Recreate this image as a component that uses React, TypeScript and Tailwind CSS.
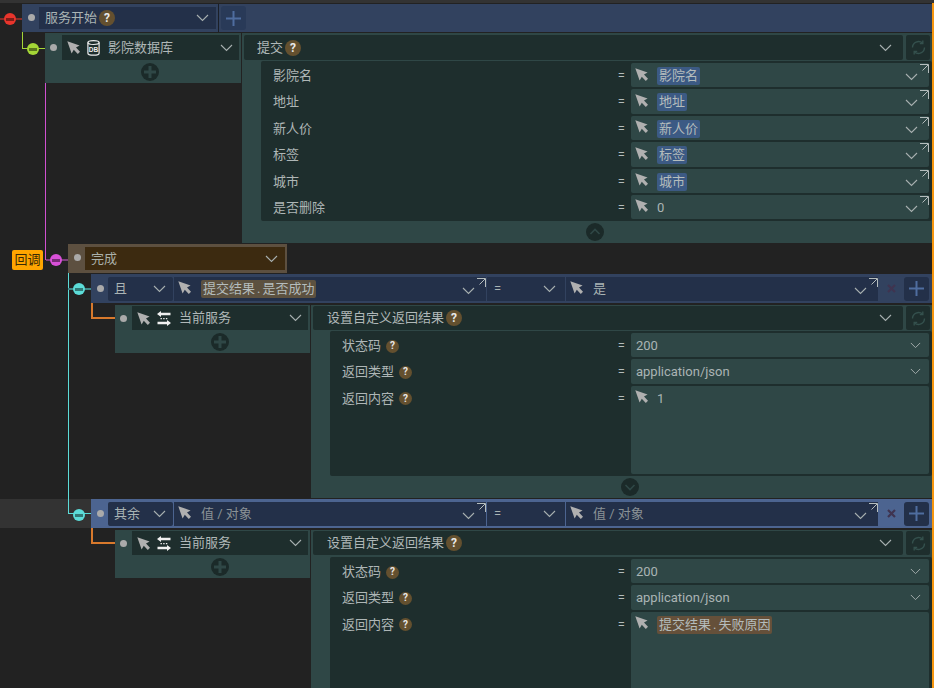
import React from "react";

const Chev = ({ className = "" }: { className?: string }) => (
  <svg width="13" height="8" viewBox="0 0 13 8" className={`shrink-0 ${className}`} fill="none" stroke="#a8b0b0" strokeWidth="1.1">
    <path d="M1 1l5.5 5.5L12 1" />
  </svg>
);

const Arrow = ({ className = "" }: { className?: string }) => (
  <svg width="13" height="13" viewBox="0 0 13 13" className={`shrink-0 ${className}`} fill="#b0b0b0">
    <path d="M0.3 0.3L12.6 4.4 9 6.5 13 10.7 10.8 12.9 6.8 8.7 4.6 12.6Z" />
  </svg>
);

const Expand = () => (
  <svg width="10" height="10" viewBox="0 0 10 10" className="absolute right-0 top-[1px]" fill="none" stroke="#b5bdbd" strokeWidth="1">
    <path d="M1 .5h8.5V9M9 1L3.5 6.5" />
  </svg>
);

const Help = ({ small = false }: { small?: boolean }) => (
  <span className={`inline-flex items-center justify-center rounded-full bg-[#64502f] text-[#e8e8e8] font-bold shrink-0 ${small ? "w-[13px] h-[13px] text-[10px]" : "w-[16px] h-[16px] text-[12px]"}`}>?</span>
);

const Dot = ({ className = "" }: { className?: string }) => <span className={`w-[7px] h-[7px] rounded-full bg-[#aaaaaa] shrink-0 ${className}`} />;

const Db = () => (
  <svg width="13" height="16" viewBox="0 0 13 16" className="shrink-0" fill="none" stroke="#eeeeee" strokeWidth="1.2">
    <ellipse cx="6.5" cy="2.6" rx="5.6" ry="1.9" />
    <path d="M.9 2.6v10.6c0 1.1 2.5 2 5.6 2s5.6-.9 5.6-2V2.6" />
    <text x="6.5" y="11.8" textAnchor="middle" fontSize="6.5" fontWeight="700" fill="#eeeeee" stroke="none" fontFamily="Liberation Sans">DB</text>
  </svg>
);

const Swap = () => (
  <svg width="14" height="15" viewBox="0 0 14 15" className="shrink-0" fill="#f0f0f0">
    <path d="M4 0L0 3l4 3V4.2h9.5V1.8H4zM10 9l4 3-4 3v-1.8H.5v-2.4H10z" />
    <path d="M3.5 7h1.4v1.2H3.5zM6.2 7h1.4v1.2H6.2zM8.9 7h1.4v1.2H8.9z" />
  </svg>
);

const Refresh = () => (
  <div className="w-[24px] ml-[3px] rounded-[2px] bg-[#1e2e2d] flex items-center justify-center shrink-0">
    <svg width="15" height="15" viewBox="0 0 15 15" fill="none" stroke="#34504d" strokeWidth="1.4">
      <path d="M1.5 7.5a6 6 0 0 1 10-4.4M13.5 7.5a6 6 0 0 1-10 4.4" />
      <path d="M11.8 .6v3h-3M3.2 14.4v-3h3" />
    </svg>
  </div>
);

const CircleBtn = ({ kind }: { kind: "plus" | "up" | "down" }) => (
  <span className="w-[18px] h-[18px] rounded-full bg-[#1b2a29] flex items-center justify-center">
    <svg width="12" height="12" viewBox="0 0 12 12" fill="none" stroke="#2f4746" strokeWidth={kind === "plus" ? 3 : 1.6}>
      {kind === "plus" && <path d="M6 0v12M0 6h12" />}
      {kind === "up" && <path d="M1.5 8L6 3.5 10.5 8" />}
      {kind === "down" && <path d="M1.5 4L6 8.5 10.5 4" />}
    </svg>
  </span>
);

const Plus = ({ bg }: { bg: string }) => (
  <div className={`w-[25px] h-[24px] rounded-[3px] flex items-center justify-center shrink-0 ${bg}`}>
    <svg width="15" height="15" viewBox="0 0 15 15" stroke="#4f6d9f" strokeWidth="2"><path d="M7.5 0v15M0 7.5h15" /></svg>
  </div>
);

const Chip = ({ children, bg }: { children: React.ReactNode; bg: string }) => (
  <span className={`px-[2px] h-[18px] leading-[18px] inline-block rounded-[2px] ${bg} text-[#b4bcbc]`}>{children}</span>
);

const Period = () => <span className="mx-[2px]">.</span>;

const Row = ({ label, help, value, tall, noArrow, noChev }: { label: string; help?: boolean; value: React.ReactNode; tall?: string; noArrow?: boolean; noChev?: boolean }) => (
  <div className={`flex mb-[2px] ${tall ?? "h-[24.4px]"}`}>
    <div className="flex-1 flex items-start justify-between pt-[3px] pr-[6px] pl-[12px] text-[#aeb6b6]">
      <span className="flex items-center gap-[5px]">{label}{help && <Help small />}</span>
      <span className="text-[#b4bcbc]">=</span>
    </div>
    <div className={`w-[298px] mr-[3px] bg-[#2f4746] rounded-[2px] relative flex items-start ${noArrow ? "pl-[5px]" : "pl-[4px]"} pt-[2px] shrink-0`}>
      {!noArrow && <Arrow className="mt-[2.5px] mr-[9px]" />}
      <span className="flex-1 mt-[1px] text-[#aab4b4]">{value}</span>
      {!noChev && (noArrow ? <Chev className="absolute right-[8px] top-[9px] w-[11px] h-[7px]" /> : <><Chev className="absolute right-[11px] top-[10px]" /><Expand /></>)}
    </div>
  </div>
);

const NodeHeader = ({ title, db, wide }: { title: string; db?: boolean; wide?: boolean }) => (
  <div className={`h-[48px] bg-[#2f4746] shrink-0 flex flex-col ${wide ? "w-[196px] h-[50px]" : "w-[195px]"}`}>
    <div className={`flex items-center ${wide ? "mt-[2px] h-[25px]" : "mt-[1px] h-[24px]"}`}>
      <Dot className="ml-[5px] mr-[5px]" />
      <div className="flex-1 mr-[2px] h-full bg-[#1e2e2d] flex items-center pl-[5px] pr-[6px] gap-[7px]">
        <Arrow />
        {db ? <Db /> : <Swap />}
        <span className="flex-1 ml-[1px] text-[#b0b8b8]">{title}</span>
        <Chev />
      </div>
    </div>
    <div className="flex-1 flex items-center justify-center pl-[14px]"><CircleBtn kind="plus" /></div>
  </div>
);

const PanelHeader = ({ title, left, compact }: { title: string; left: string; compact?: boolean }) => (
  <div className={`flex shrink-0 mx-[2px] ${compact ? "h-[24px] mt-[1px]" : "h-[25px] mt-[2px]"}`}>
    <div className={`flex-1 bg-[#1e2e2d] rounded-[2px] flex items-center ${left} pr-[11px] gap-[2px] text-[#b0b8b8]`}>
      <span>{title}</span><Help />
      <span className="flex-1" />
      <Chev />
    </div>
    <Refresh />
  </div>
);

const Select = ({ w, children }: { w: string; children: React.ReactNode }) => (
  <div className={`${w} bg-[#233049] h-[24px] relative flex items-center shrink-0 text-[#aab4b4]`}>{children}</div>
);

const CondBar = ({ label, bar, left, right }: { label: string; bar: string; left: React.ReactNode; right: React.ReactNode }) => (
  <div className={`flex items-center h-[29px] ml-[91px] mr-[2px] ${bar}`}>
    <Dot className="ml-[6px] mr-[4px] mb-[1px]" />
    <div className="flex items-center gap-[1px]">
      <Select w="w-[65px] rounded-[2px]"><span className="ml-[6px] flex-1">{label}</span><Chev className="mr-[7px]" /></Select>
      <Select w="w-[312px]"><Arrow className="ml-[4px] mr-[10px] mb-[2px]" />{left}<Chev className="absolute right-[11px] top-[10px]" /><Expand /></Select>
      <Select w="w-[78px]"><span className="ml-[7px] flex-1">=</span><Chev className="mr-[9px]" /></Select>
      <Select w="w-[312px]"><Arrow className="ml-[4px] mr-[10px] mb-[2px]" />{right}<Chev className="absolute right-[11px] top-[10px]" /><Expand /></Select>
    </div>
    <span className="w-[26px] flex justify-center shrink-0">
      <svg width="9" height="9" viewBox="0 0 9 9" stroke="#3f3450" strokeWidth="2.2"><path d="M1 1l7 7M8 1L1 8" /></svg>
    </span>
    <Plus bg="bg-[#233049]" />
  </div>
);

const Sub = ({ last, value }: { last?: boolean; value: React.ReactNode }) => (
  <div className={`flex ml-[115px] mr-[2px] gap-[1px] mt-[2px] ${last ? "h-[170px]" : "h-[193px]"}`}>
    <NodeHeader title="当前服务" />
    <div className="flex-1 bg-[#2f4746] flex flex-col min-w-0">
      <PanelHeader title="设置自定义返回结果" left="pl-[14px]" compact />
      <div className={`ml-[19px] pt-[2px] bg-[#1e2e2d] flex-1 rounded-[2px] flex flex-col min-h-0 ${last ? "mt-[2px]" : "mt-[1px]"}`}>
        <Row label="状态码" help value="200" noArrow />
        <Row label="返回类型" help value="application/json" noArrow />
        <Row label="返回内容" help value={value} tall="flex-1" noChev />
      </div>
      {!last && <div className="h-[22px] flex items-center justify-center shrink-0 pl-[16px]"><CircleBtn kind="down" /></div>}
    </div>
  </div>
);

const firstRows: [string, React.ReactNode][] = [
  ["影院名", <Chip bg="bg-[#3c5a84]">影院名</Chip>],
  ["地址", <Chip bg="bg-[#3c5a84]">地址</Chip>],
  ["新人价", <Chip bg="bg-[#3c5a84]">新人价</Chip>],
  ["标签", <Chip bg="bg-[#3c5a84]">标签</Chip>],
  ["城市", <Chip bg="bg-[#3c5a84]">城市</Chip>],
  ["是否删除", "0"],
];

const Knob = ({ x, y, color }: { x: string; y: string; color: string }) => (
  <span className={`absolute ${x} ${y} w-[12px] h-[12px] rounded-full ${color} flex items-center justify-center`}>
    <span className="w-[8px] h-[3px] bg-black/45" />
  </span>
);

export default function App() {
  return (
    <div className="relative w-[934px] h-[688px] overflow-hidden bg-[#222222] text-[13px] leading-[20px]" style={{ fontFamily: 'Roboto, "Noto Sans CJK SC", sans-serif' }}>
      <div className="h-[3px] bg-[#333333]" />
      <div className="h-[1px]" />

      {/* start bar */}
      <div className="flex items-center h-[28px] ml-[22px] mr-[2px] bg-[#32425f]">
        <Dot className="ml-[6px] mr-[4px] mb-[1px]" />
        <div className="w-[177px] h-[22px] bg-[#233049] flex items-center pl-[6px] pr-[7px] gap-[2px] text-[#aab4b4]">
          <span>服务开始</span><Help /><span className="flex-1" /><Chev />
        </div>
        <span className="w-[1px] h-[28px] bg-[#1b1f27] ml-[2px] mr-[2px]" />
        <Plus bg="bg-[#293a58]" />
      </div>

      {/* database node */}
      <div className="flex ml-[45px] mr-[2px] mt-[1px] h-[210px] gap-[1px]">
        <NodeHeader title="影院数据库" db wide />
        <div className="flex-1 bg-[#2f4746] flex flex-col min-w-0">
          <PanelHeader title="提交" left="pl-[13px]" />
          <div className="ml-[19px] mt-[1px] pt-[2px] bg-[#1e2e2d] h-[160px] rounded-[2px] shrink-0">
            {firstRows.map(([l, v]) => <Row key={l} label={l} value={v} />)}
          </div>
          <div className="flex-1 flex items-center justify-center pl-[16px]"><CircleBtn kind="up" /></div>
        </div>
      </div>

      {/* callback bar */}
      <div className="flex items-center h-[29px] ml-[68px] mt-[1px] w-[219px] bg-[#5d5040]">
        <Dot className="ml-[6px] mr-[4px] mb-[3px]" />
        <div className="w-[200px] h-[23px] bg-[#3c2a10] flex items-center pl-[6px] pr-[7px] pt-[1px] text-[#aab0aa] justify-between">
          <span>完成</span><Chev />
        </div>
      </div>

      <div className="mt-[1px]" />
      <CondBar label="且" bar="bg-[#32425f]" left={<Chip bg="bg-[#5c5140]">提交结果<Period />是否成功</Chip>} right={<span>是</span>} />
      <Sub value={<span>1</span>} />

      <div className="mt-[1px] relative">
        <div className="absolute left-0 top-0 w-[91px] h-[29px] bg-[#333333]" />
        <CondBar label="其余" bar="bg-[#4c6490]" left={<span className="text-[#8a9296]">值 / 对象</span>} right={<span className="text-[#8a9296]">值 / 对象</span>} />
      </div>
      <Sub last value={<Chip bg="bg-[#65503a]">提交结果<Period />失败原因</Chip>} />

      {/* orange edge */}
      <div className="absolute right-0 top-[3px] bottom-0 w-[2px] bg-[#f5960f]" />

      {/* connectors */}
      <div className="absolute left-0 top-[18px] w-[22px] h-[2px] bg-[#8a2c26]" />
      <div className="absolute left-[22px] top-[32px] w-[23px] h-[17px] border-l border-b border-[#a4d636]" />
      <div className="absolute left-[45px] top-[83px] w-[23px] h-[177px] border-l border-b border-[#d050d0]" />
      <div className="absolute left-[46px] top-[259px] w-[22px] h-[2px] bg-[#7c3f7c]" />
      <div className="absolute left-[68px] top-[273px] w-[23px] h-[241px] border-l border-b border-[#5cdcd8]" />
      <div className="absolute left-[68px] top-[288px] w-[23px] h-[2px] bg-[#3f8a8a]" />
      <div className="absolute left-[91px] top-[303px] w-[24px] h-[16px] border-l-2 border-b-2 border-[#d8792c]" />
      <div className="absolute left-[91px] top-[528px] w-[24px] h-[16px] border-l-2 border-b-2 border-[#d8792c]" />

      <Knob x="left-[4px]" y="top-[13px]" color="bg-[#e8352c]" />
      <Knob x="left-[27px]" y="top-[43px]" color="bg-[#a4d636]" />
      <Knob x="left-[50px]" y="top-[254px]" color="bg-[#d850d8]" />
      <Knob x="left-[73px]" y="top-[283px]" color="bg-[#5cdcd8]" />
      <Knob x="left-[73px]" y="top-[509px]" color="bg-[#5cdcd8]" />

      <div className="absolute left-[12px] top-[250px] w-[31px] h-[20px] rounded-[2px] bg-[#ffa500] text-[#3a2a05] text-center text-[13px] leading-[20px]">回调</div>
    </div>
  );
}
